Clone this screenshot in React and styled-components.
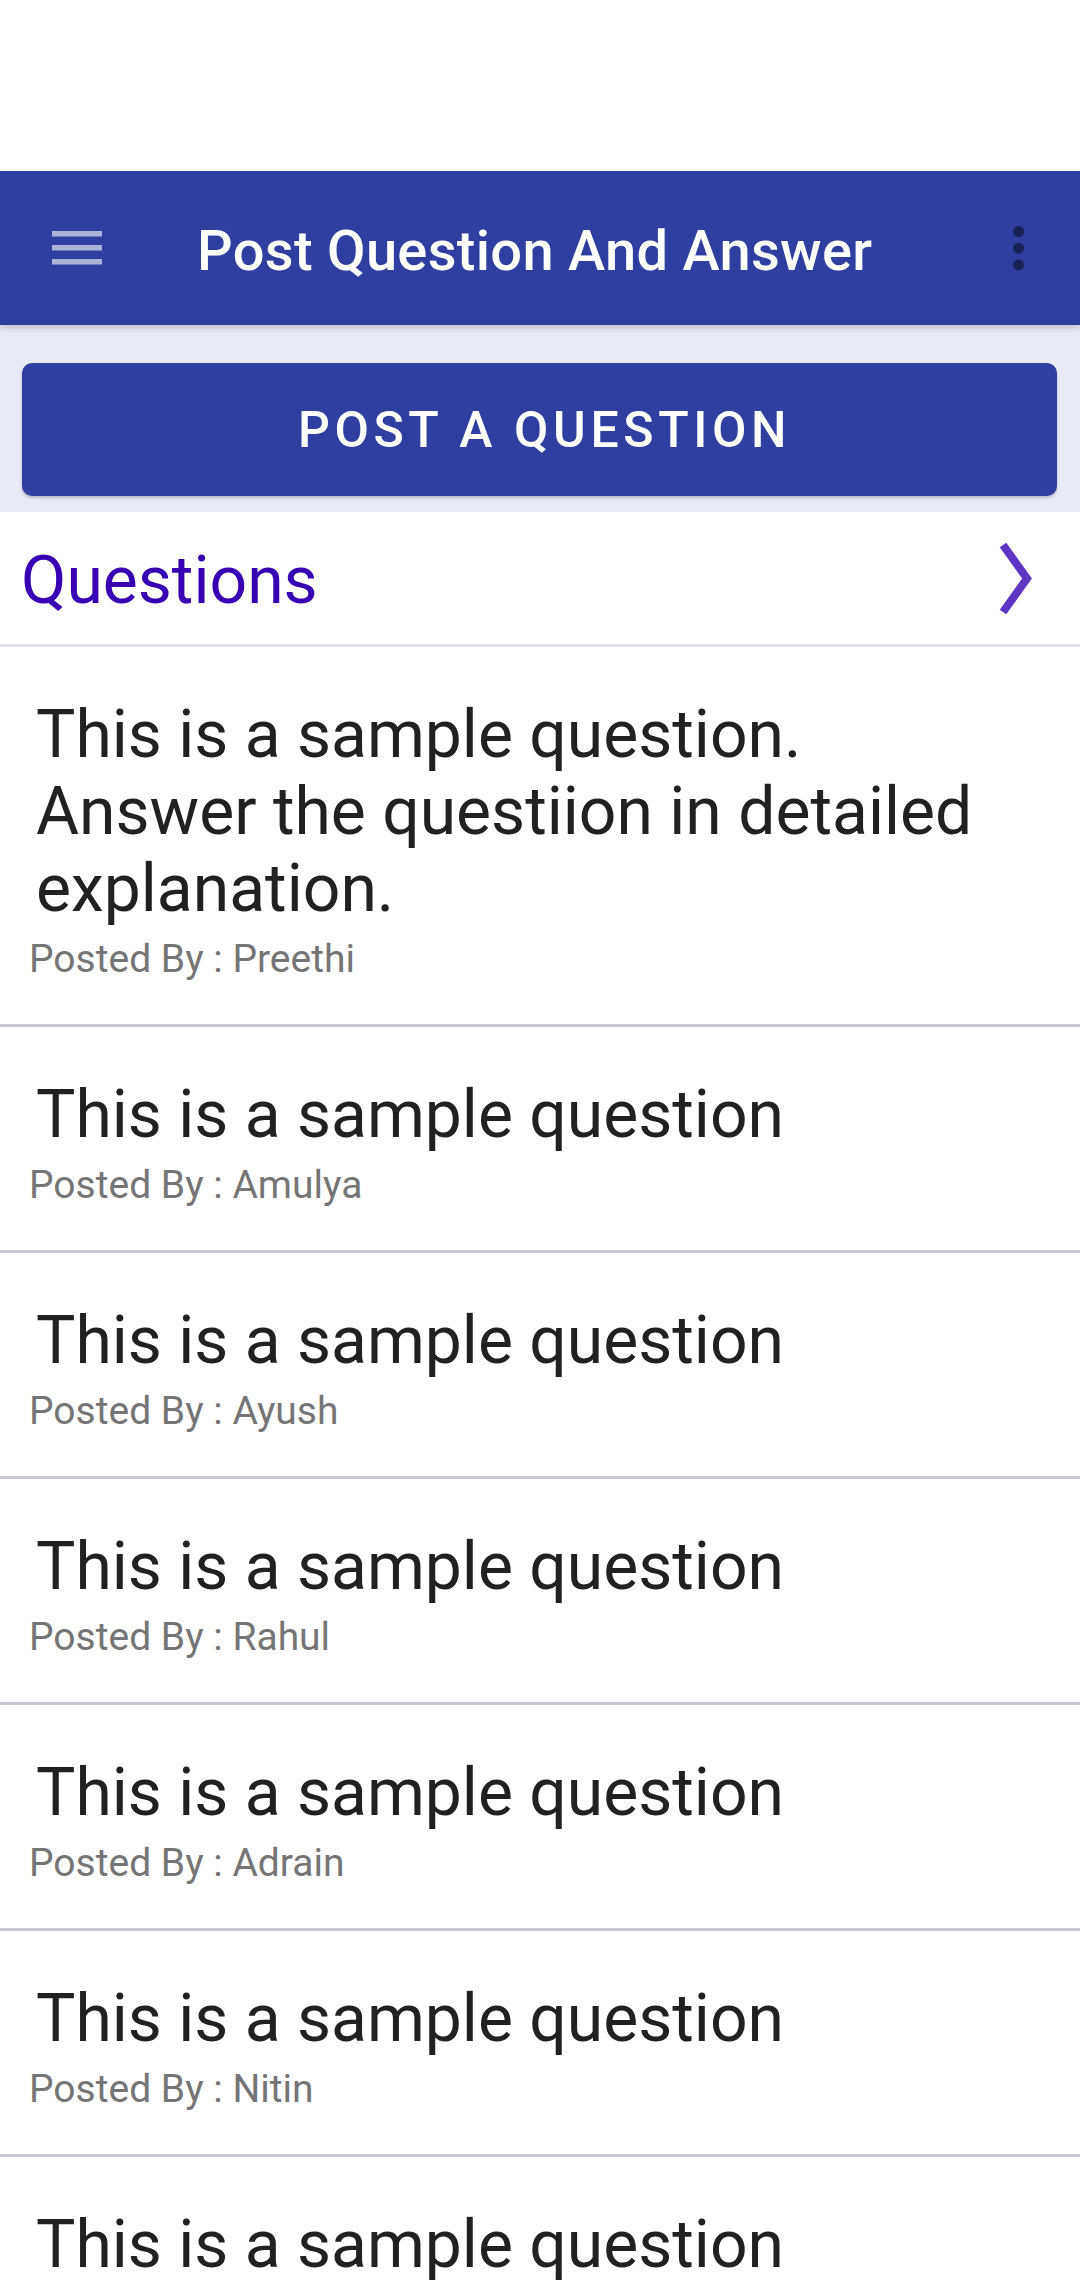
import React from 'react';
import styled, { createGlobalStyle } from 'styled-components';

const GlobalStyle = createGlobalStyle`
  body {
    margin: 0;
    background: #ffffff;
    font-family: Roboto, "Noto Sans", "Liberation Sans", sans-serif;
  }
`;

const Page = styled.div`
  width: 1080px;
  height: 2280px;
  overflow: hidden;
  background: #ffffff;
`;

const StatusBar = styled.div`
  height: 171px;
  background: #ffffff;
`;

const AppBar = styled.header`
  position: relative;
  z-index: 2;
  display: flex;
  align-items: center;
  height: 154px;
  padding: 0 56px 0 52px;
  background: #303f9f;
  box-shadow: 0 3px 6px rgba(0, 0, 0, 0.18);
`;

const Title = styled.h1`
  flex: 1;
  margin: 6px 0 0 95px;
  font-size: 56px;
  font-weight: 500;
  letter-spacing: 0.3px;
  color: #ffffff;
`;

const ButtonArea = styled.div`
  padding: 38px 23px 16px 22px;
  background: #e8eaf6;
`;

const PostButton = styled.button`
  display: block;
  width: 100%;
  height: 133px;
  padding: 0 0 0 10px;
  border: none;
  border-radius: 10px;
  background: #303f9f;
  box-shadow: 0 2px 3px rgba(0, 0, 0, 0.2);
  color: #ffffff;
  font-family: Roboto, "Noto Sans", sans-serif;
  font-size: 50px;
  font-weight: 500;
  letter-spacing: 4.6px;
  text-transform: uppercase;
`;

const SectionHeader = styled.div`
  display: flex;
  align-items: center;
  justify-content: space-between;
  height: 132px;
  padding: 0 48px 0 21px;
  border-bottom: 3px solid #dfe0ec;
`;

const SectionTitle = styled.h2`
  margin: 6px 0 0;
  font-size: 66px;
  font-weight: 400;
  line-height: 76px;
  color: #3700b3;
`;

const Row = styled.div`
  padding: 49px 0 43px;
  border-bottom: 3px solid #c5c7d3;
`;

const QuestionText = styled.p`
  margin: 0;
  padding: 0 72px 0 36px;
  font-size: 66px;
  line-height: 77px;
  color: #212121;
`;

const PostedBy = styled.p`
  margin: 10px 0 0;
  padding-left: 29px;
  font-size: 39px;
  line-height: 44px;
  color: #757575;
`;

const MenuIcon = () => (
  <svg width="50" height="34" viewBox="0 0 50 34">
    {[0, 14, 28].map((y) => (
      <rect key={y} x="0" y={y} width="50" height="5.5" fill="#acb2d8" />
    ))}
  </svg>
);

const MoreIcon = () => (
  <svg width="11" height="45" viewBox="0 0 11 45">
    {[5.5, 22.2, 38.9].map((cy) => (
      <circle key={cy} cx="5.5" cy={cy} r="5.5" fill="#1b2157" />
    ))}
  </svg>
);

const Chevron = () => (
  <svg width="34" height="73" viewBox="0 0 34 73">
    <polyline points="5,3 29,36.5 5,70" fill="none" stroke="#5e35c2" strokeWidth="8" />
  </svg>
);

const questions = [
  { text: 'This is a sample question. Answer the questiion in detailed explanation.', by: 'Preethi' },
  { text: 'This is a sample question', by: 'Amulya' },
  { text: 'This is a sample question', by: 'Ayush' },
  { text: 'This is a sample question', by: 'Rahul' },
  { text: 'This is a sample question', by: 'Adrain' },
  { text: 'This is a sample question', by: 'Nitin' },
  { text: 'This is a sample question', by: 'Preethi' },
];

export default function App() {
  return (
    <Page>
      <GlobalStyle />
      <StatusBar />
      <AppBar>
        <MenuIcon />
        <Title>Post Question And Answer</Title>
        <MoreIcon />
      </AppBar>
      <ButtonArea>
        <PostButton>Post a question</PostButton>
      </ButtonArea>
      <SectionHeader>
        <SectionTitle>Questions</SectionTitle>
        <Chevron />
      </SectionHeader>
      {questions.map((q, i) => (
        <Row key={i}>
          <QuestionText>{q.text}</QuestionText>
          <PostedBy>Posted By : {q.by}</PostedBy>
        </Row>
      ))}
    </Page>
  );
}
